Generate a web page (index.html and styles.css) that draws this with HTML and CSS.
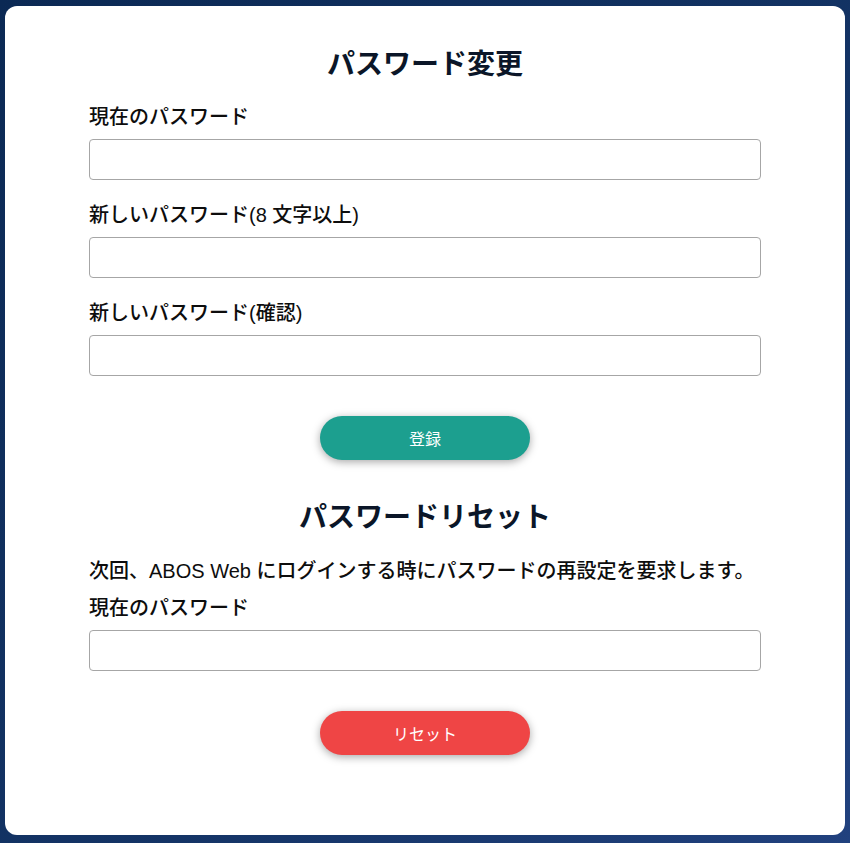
FILE: index.html
```html
<!DOCTYPE html>
<html lang="ja">
<head>
<meta charset="utf-8">
<title>パスワード変更</title>
<link rel="stylesheet" href="styles.css">
</head>
<body>
<main class="card">
  <section class="section">
    <h1 class="title">パスワード変更</h1>
    <div class="field">
      <label class="label" for="cur">現在のパスワード</label>
      <input class="input" id="cur" type="password">
    </div>
    <div class="field">
      <label class="label" for="new1">新しいパスワード(8 文字以上)</label>
      <input class="input" id="new1" type="password">
    </div>
    <div class="field">
      <label class="label" for="new2">新しいパスワード(確認)</label>
      <input class="input" id="new2" type="password">
    </div>
    <div class="actions">
      <button class="btn btn-teal" type="button">登録</button>
    </div>
  </section>
  <section class="section">
    <h1 class="title title-2">パスワードリセット</h1>
    <p class="desc">次回、ABOS Web にログインする時にパスワードの再設定を要求します。</p>
    <div class="field">
      <label class="label" for="cur2">現在のパスワード</label>
      <input class="input" id="cur2" type="password">
    </div>
    <div class="actions">
      <button class="btn btn-red" type="button">リセット</button>
    </div>
  </section>
</main>
</body>
</html>
```

FILE: styles.css
```css
html, body {
  margin: 0;
  padding: 0;
}
body {
  min-height: 843px;
  box-sizing: border-box;
  padding: 6px 5px 9px 5px;
  background: linear-gradient(135deg, #0b2954 0%, #143466 60%, #21417e 100%);
  font-family: "Liberation Sans", "Noto Sans CJK JP", sans-serif;
  color: #111;
}
.card {
  background: #fff;
  border-radius: 12px;
  padding: 36px 0 80px 0;
  min-height: 828px;
  box-sizing: border-box;
}
.section {
  width: 672px;
  margin: 0 auto;
}
.title {
  margin: 0 0 20px 0;
  font-family: "Noto Sans CJK JP", sans-serif;
  font-size: 28px;
  line-height: 40px;
  font-weight: 700;
  color: #0b1628;
  text-align: center;
}
.title-2 {
  margin-top: 35px;
  margin-bottom: 21px;
}
.desc {
  margin: 0 0 7px 0;
  font-size: 20px;
  line-height: 30px;
  font-weight: 500;
  color: #0d0d0d;
}
.field {
  display: flex;
  flex-direction: column;
  margin-bottom: 20px;
}
.field:last-of-type {
  margin-bottom: 0;
}
.label {
  font-size: 20px;
  line-height: 30px;
  margin-bottom: 7px;
  font-weight: 500;
  color: #0d0d0d;
}
.input {
  height: 41px;
  box-sizing: border-box;
  border: 1px solid #a6a6a6;
  border-radius: 4px;
  padding: 0 10px;
  font-size: 16px;
  background: #fff;
  margin: 0;
}
.actions {
  display: flex;
  justify-content: center;
  margin-top: 40px;
}
.btn {
  width: 210px;
  height: 44px;
  border: none;
  border-radius: 22px;
  color: #fff;
  font-family: "Noto Sans CJK JP", sans-serif;
  font-size: 16px;
  box-shadow: 0 2px 8px rgba(0, 0, 0, 0.35);
  cursor: pointer;
}
.btn-teal {
  background: #1c9f8f;
}
.btn-red {
  background: #ef4545;
}
```
